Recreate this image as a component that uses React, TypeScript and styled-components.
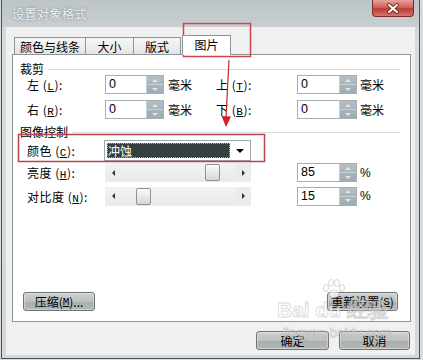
import React from "react";
import styled, { createGlobalStyle } from "styled-components";

const GlobalStyle = createGlobalStyle`
  html, body {
    margin: 0;
    padding: 0;
  }
  body {
    width: 423px;
    height: 360px;
    overflow: hidden;
    background: #d7dbdd;
    font-family: "Noto Sans CJK SC", "Noto Sans", sans-serif;
    font-size: 12px;
    color: #000;
  }
`;

const Page = styled.div`
  position: relative;
  width: 423px;
  height: 360px;
  padding-left: 1px;
  box-sizing: border-box;
`;

const Window = styled.div`
  width: 419px;
  height: 359px;
  box-sizing: border-box;
  border: 1px solid #4b5559;
  border-top: none;
  background: linear-gradient(#c6cdd0, #d6dbdd 40px, #d3d8da);
  display: flex;
  flex-direction: column;
`;

const TitleBar = styled.div`
  height: 27px;
  flex: none;
  display: flex;
  justify-content: space-between;
  padding-left: 10px;
  background: linear-gradient(#bcc4c8, #c8cfd2);
`;

const Title = styled.span`
  line-height: 27px;
  color: #f2f5f6;
  letter-spacing: 0.5px;
  text-shadow: 0 0 3px #7f8a8f, 0 0 1px #8d979b;
`;

const CloseButton = styled.div`
  width: 42px;
  height: 17px;
  margin-right: 5px;
  box-sizing: border-box;
  border: 1px solid #7d2e2b;
  border-top: none;
  border-radius: 0 0 4px 4px;
  background: linear-gradient(#e7a29d, #d2645d 45%, #bc3b33 55%, #d4766d);
  display: flex;
  align-items: center;
  justify-content: center;
`;

const Client = styled.div`
  flex: 1;
  margin: 0 4px 3px;
  padding: 8px 4px 0 6px;
  background: #f0f0f0;
  display: flex;
  flex-direction: column;
`;

const TabRow = styled.div`
  height: 19px;
  display: flex;
  align-items: flex-end;
  padding-left: 2px;
  position: relative;
  z-index: 1;
`;

const Tab = styled.div<{ $w: number; $active?: boolean }>`
  width: ${(p) => p.$w}px;
  height: ${(p) => (p.$active ? 20 : 17)}px;
  margin-bottom: ${(p) => (p.$active ? -1 : 0)}px;
  margin-left: ${(p) => (p.$active ? 1 : -1)}px;
  box-sizing: border-box;
  border: 1px solid #8f9498;
  border-bottom: none;
  background: ${(p) =>
    p.$active ? "#fff" : "linear-gradient(#f7f7f7, #e4e4e4)"};
  display: flex;
  align-items: center;
  justify-content: center;
  padding-bottom: ${(p) => (p.$active ? 3 : 0)}px;
  &:first-child {
    margin-left: 0;
  }
`;

const Panel = styled.div`
  width: 399px;
  height: 268px;
  box-sizing: border-box;
  border: 1px solid #8f9498;
  background: #fff;
  padding: 0 7px;
  display: flex;
  flex-direction: column;
`;

const GroupHeading = styled.div<{ $top: number }>`
  margin-top: ${(p) => p.$top}px;
  height: 12px;
  line-height: 12px;
  display: flex;
  align-items: center;
  &::after {
    content: "";
    flex: 1;
    height: 1px;
    margin: 0 3px 0 4px;
    background: #d5dde2;
  }
`;

const CropGrid = styled.div`
  padding-left: 7px;
  display: grid;
  grid-template-columns: 78px 59px 52px 81px 60px auto;
  grid-auto-rows: 19px;
  row-gap: 6px;
  align-items: center;
`;

const ImageGrid = styled.div`
  margin-top: 2px;
  padding-left: 7px;
  display: grid;
  grid-template-columns: 78px 146px 46px 60px auto;
  grid-template-rows: 21px 23px 24px;
  align-items: center;
`;

const Label = styled.span`
  white-space: nowrap;
  letter-spacing: 0.5px;
`;

const Key = styled.span`
  text-decoration: underline;
  font-family: "Liberation Mono", monospace;
  font-size: 11px;
`;

const Unit = styled.span<{ $pad: number; $latin?: boolean }>`
  padding-left: ${(p) => p.$pad}px;
  font-family: ${(p) =>
    p.$latin ? '"Liberation Sans", sans-serif' : "inherit"};
`;

const SpinBox = styled.div`
  height: 19px;
  box-sizing: border-box;
  border: 1px solid #a7aeb3;
  background: #fff;
  display: flex;
`;

const SpinValue = styled.div`
  flex: 1;
  padding-left: 3px;
  line-height: 17px;
  font-family: "Liberation Sans", sans-serif;
  font-size: 12.5px;
`;

const SpinButtons = styled.div`
  width: 16px;
  display: flex;
  flex-direction: column;
  background: linear-gradient(#b3bec5, #9eabb3);
  border-left: 1px solid #c5ced3;
`;

const SpinArrow = styled.div<{ $down?: boolean }>`
  flex: 1;
  display: flex;
  align-items: center;
  justify-content: center;
  border-top: ${(p) => (p.$down ? "1px solid #c7d0d5" : "none")};
  &::before {
    content: "";
    border-left: 3px solid transparent;
    border-right: 3px solid transparent;
    ${(p) =>
      p.$down
        ? "border-top: 3px solid #dfe5e8;"
        : "border-bottom: 3px solid #dfe5e8;"}
  }
`;

const Select = styled.div`
  height: 21px;
  margin-left: -1px;
  box-sizing: border-box;
  border: 1px solid #a2a9ae;
  background: #fff;
  padding: 2px 0 2px 2px;
  display: flex;
`;

const SelectValue = styled.div`
  flex: 1;
  background: #33403f;
  outline: 1px dotted #a9b3b2;
  outline-offset: -1px;
  color: #fff;
  line-height: 15px;
  padding-left: 1px;
`;

const SelectArrow = styled.div`
  width: 20px;
  display: flex;
  align-items: center;
  justify-content: center;
  &::before {
    content: "";
    margin-top: 1px;
    border-left: 4px solid transparent;
    border-right: 4px solid transparent;
    border-top: 4px solid #000;
  }
`;

const Slider = styled.div`
  position: relative;
  height: 19px;
  background: linear-gradient(#f3f3f3, #e9e9e9);
  display: flex;
  justify-content: space-between;
  align-items: center;
`;

const SliderArrow = styled.div<{ $right?: boolean }>`
  width: 16px;
  height: 19px;
  display: flex;
  align-items: center;
  justify-content: center;
  background: ${(p) => (p.$right ? "#ececec" : "transparent")};
  &::before {
    content: "";
    border-top: 3px solid transparent;
    border-bottom: 3px solid transparent;
    ${(p) =>
      p.$right
        ? "border-left: 3px solid #333;"
        : "border-right: 3px solid #333;"}
  }
`;

const SliderThumb = styled.div`
  position: absolute;
  top: 1px;
  width: 15px;
  height: 17px;
  box-sizing: border-box;
  border: 1px solid #8c9296;
  border-radius: 2px;
  background: linear-gradient(#fbfbfb, #e6e6e6 60%, #d5d5d5);
`;

const ButtonRow = styled.div<{ $mt: string; $mb: number; $pl: number; $pr: number; $end?: boolean }>`
  margin-top: ${(p) => p.$mt};
  margin-bottom: ${(p) => p.$mb}px;
  padding: 0 ${(p) => p.$pr}px 0 ${(p) => p.$pl}px;
  display: flex;
  justify-content: ${(p) => (p.$end ? "flex-end" : "space-between")};
  gap: 10px;
`;

const Button = styled.div<{ $w: number }>`
  width: ${(p) => p.$w}px;
  height: 19px;
  box-sizing: border-box;
  border: 1px solid #6d7474;
  border-radius: 3px;
  background: linear-gradient(#cdd1d1, #bcc0c0 50%, #a9aeae 51%, #b3b7b7);
  box-shadow: inset 0 0 0 1px rgba(255, 255, 255, 0.35);
  display: flex;
  align-items: center;
  justify-content: center;
  white-space: nowrap;
`;

const Overlay = styled.svg`
  position: absolute;
  left: 0;
  top: 0;
  pointer-events: none;
`;

const Watermark = styled.div`
  position: absolute;
  left: 277px;
  top: 298px;
  pointer-events: none;
  display: flex;
  flex-direction: column;
  align-items: flex-start;
  color: rgba(255, 255, 255, 0.6);
  -webkit-text-stroke: 1px rgba(120, 120, 120, 0.28);
`;

const WatermarkBig = styled.span`
  font-family: "Liberation Sans", sans-serif;
  font-size: 21px;
  font-weight: 700;
  line-height: 24px;
`;

const WatermarkSmall = styled.span`
  font-family: "Liberation Sans", sans-serif;
  font-size: 13.5px;
  line-height: 15px;
  margin: 3px 0 0 6px;
`;

const L = ({ text, k }: { text: string; k: string }) => (
  <Label>
    {text} (<Key>{k}</Key>):
  </Label>
);

const Spin = ({ value }: { value: string }) => (
  <SpinBox>
    <SpinValue>{value}</SpinValue>
    <SpinButtons>
      <SpinArrow />
      <SpinArrow $down />
    </SpinButtons>
  </SpinBox>
);

const TRACK = 146 - 32 - 15;
const Scroll = ({ value }: { value: number }) => (
  <Slider>
    <SliderArrow />
    <SliderThumb style={{ left: 16 + Math.round((TRACK * value) / 100) }} />
    <SliderArrow $right />
  </Slider>
);

export default function App() {
  return (
    <Page>
      <GlobalStyle />
      <Window>
        <TitleBar>
          <Title>设置对象格式</Title>
          <CloseButton>
            <svg width="14" height="11" viewBox="0 0 14 11">
              <path d="M3 2 L11 9 M11 2 L3 9" stroke="#7a2a27" strokeWidth="4" strokeLinecap="round" />
              <path d="M3 2 L11 9 M11 2 L3 9" stroke="#fff" strokeWidth="2" strokeLinecap="round" />
            </svg>
          </CloseButton>
        </TitleBar>
        <Client>
          <TabRow>
            <Tab $w={72}>颜色与线条</Tab>
            <Tab $w={49}>大小</Tab>
            <Tab $w={48}>版式</Tab>
            <Tab $w={49} $active>图片</Tab>
          </TabRow>
          <Panel>
            <GroupHeading $top={8}>裁剪</GroupHeading>
            <CropGrid>
              <L text="左" k="L" />
              <Spin value="0" />
              <Unit $pad={4}>毫米</Unit>
              <L text="上" k="T" />
              <Spin value="0" />
              <Unit $pad={3}>毫米</Unit>
              <L text="右" k="R" />
              <Spin value="0" />
              <Unit $pad={4}>毫米</Unit>
              <L text="下" k="B" />
              <Spin value="0" />
              <Unit $pad={3}>毫米</Unit>
            </CropGrid>
            <GroupHeading $top={7}>图像控制</GroupHeading>
            <ImageGrid>
              <L text="颜色" k="C" />
              <Select>
                <SelectValue>冲蚀</SelectValue>
                <SelectArrow />
              </Select>
              <span />
              <span />
              <span />
              <L text="亮度" k="H" />
              <Scroll value={85} />
              <span />
              <Spin value="85" />
              <Unit $pad={3} $latin>%</Unit>
              <L text="对比度" k="N" />
              <Scroll value={15} />
              <span />
              <Spin value="15" />
              <Unit $pad={3} $latin>%</Unit>
            </ImageGrid>
            <ButtonRow $mt="auto" $mb={10} $pl={3} $pr={5}>
              <Button $w={72}>
                压缩(<Key>M</Key>)...
              </Button>
              <Button $w={71}>
                重新设置(<Key>S</Key>)
              </Button>
            </ButtonRow>
          </Panel>
          <ButtonRow $mt="9px" $mb={0} $pl={0} $pr={1} $end>
            <Button $w={73}>确定</Button>
            <Button $w={71}>取消</Button>
          </ButtonRow>
        </Client>
      </Window>
      <Watermark>
        <WatermarkBig>Bai du 经验</WatermarkBig>
        <WatermarkSmall>jingyan.baidu.com</WatermarkSmall>
      </Watermark>
      <Overlay width="423" height="360">
        <g fill="rgba(255,255,255,0.6)" stroke="rgba(120,120,120,0.3)">
          <ellipse cx="326" cy="288" rx="2.5" ry="3.5" />
          <ellipse cx="331" cy="283" rx="2.5" ry="3.5" />
          <ellipse cx="337" cy="283" rx="2.5" ry="3.5" />
          <ellipse cx="342" cy="288" rx="2.5" ry="3.5" />
          <ellipse cx="334" cy="294" rx="5" ry="4" />
        </g>
        <rect x="183.5" y="23.5" width="67" height="33" fill="none" stroke="#c9474a" strokeWidth="1.5" />
        <rect x="18.5" y="134.5" width="246" height="27" fill="none" stroke="#b2464a" strokeWidth="1.5" />
        <path d="M229 60 L226 118" stroke="#c02a2e" strokeWidth="1.2" />
        <path d="M221.5 116 L231 116.5 L226 127 Z" fill="#d0202a" />
      </Overlay>
    </Page>
  );
}
